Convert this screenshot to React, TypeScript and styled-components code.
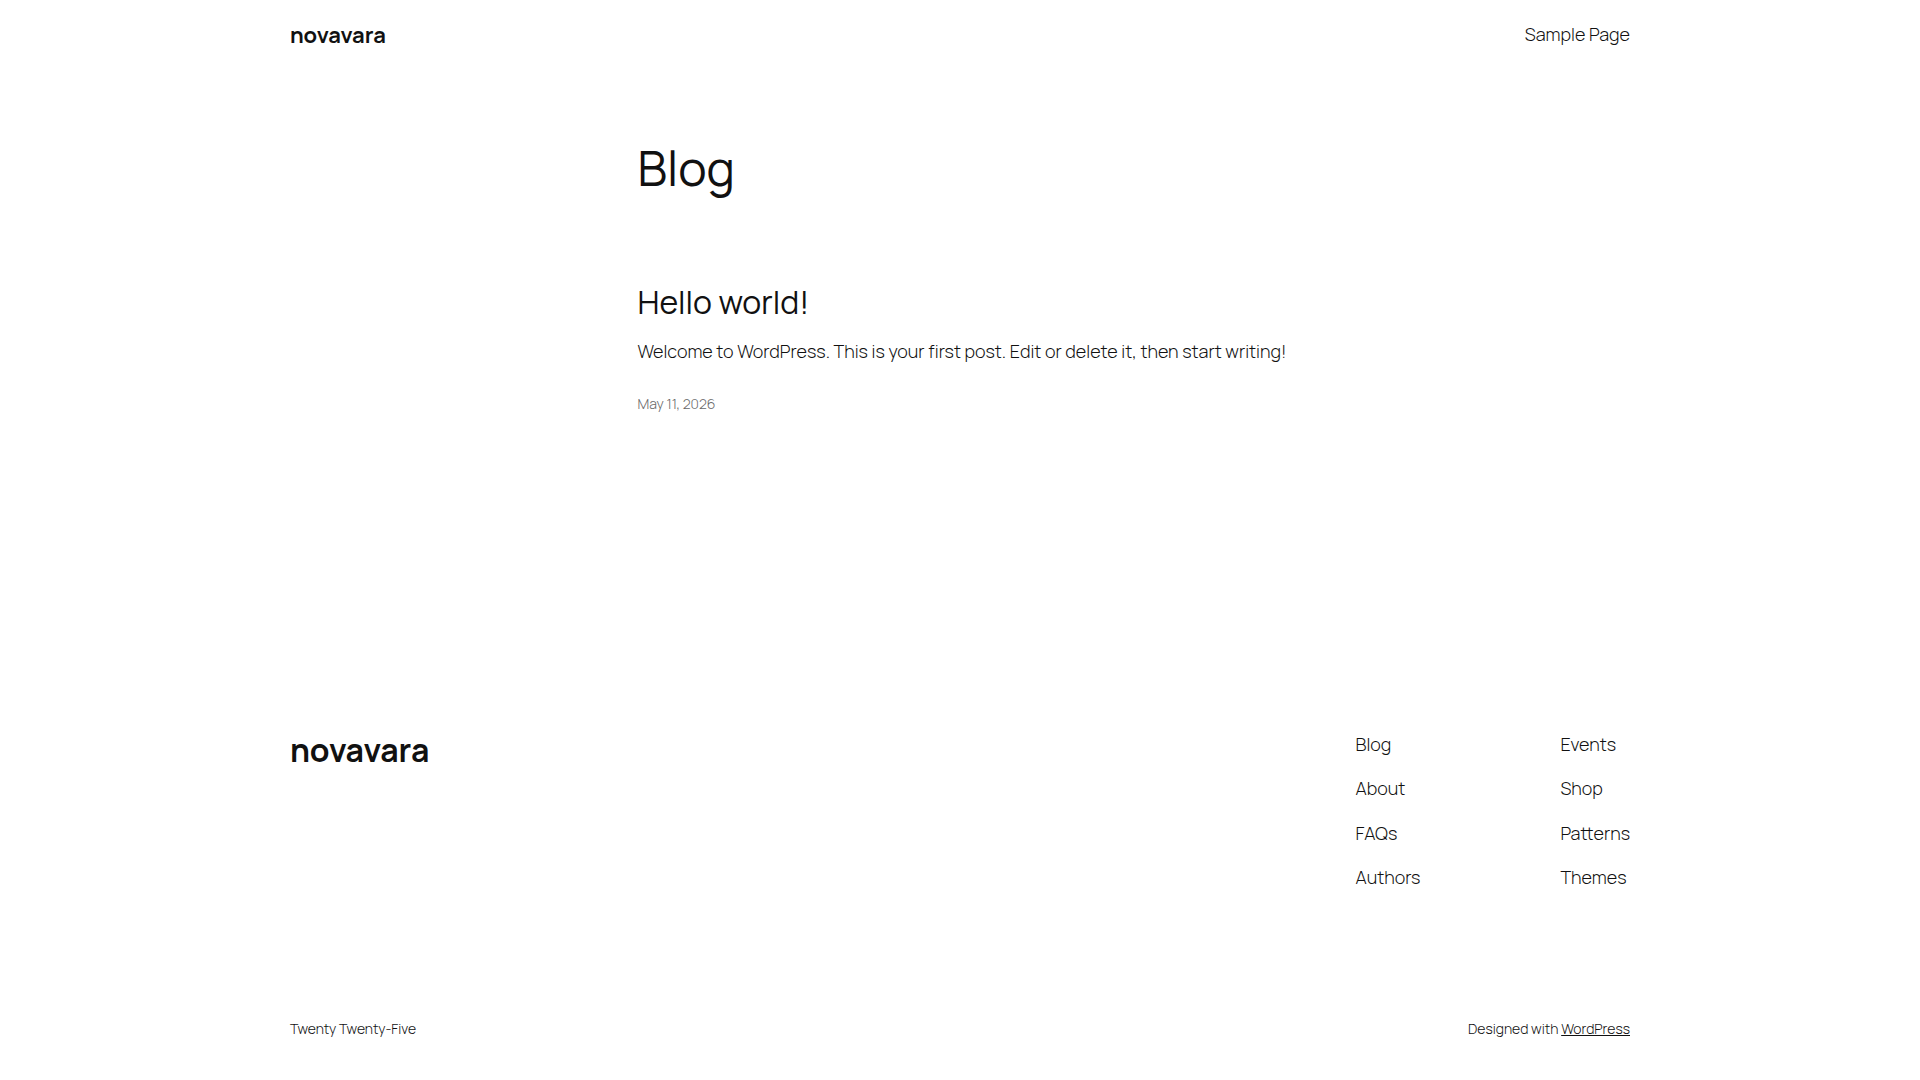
import React from "react";
import styled, { createGlobalStyle } from "styled-components";

const GlobalStyle = createGlobalStyle`
  *, *::before, *::after { box-sizing: border-box; }
  body {
    margin: 0;
    background: #fff;
    color: #111;
    font-family: Manrope, Inter, "Liberation Sans", sans-serif;
    font-size: 18px;
    font-weight: 300;
    line-height: 1.4;
  }
  a { color: inherit; text-decoration: none; }
  a:hover { text-decoration: underline; }
`;

const Section = styled.div`
  padding: 0 50px;
`;

const Wide = styled.div`
  max-width: 1340px;
  margin: 0 auto;
`;

const Narrow = styled.div`
  max-width: 645px;
  margin: 0 auto;
`;

const Bar = styled(Wide)`
  display: flex;
  align-items: center;
  justify-content: space-between;
`;

const HeaderBar = styled(Bar)`
  padding: 20px 0;
  min-height: 70px;
`;

const SiteTitle = styled.p<{ $large?: boolean }>`
  margin: 0;
  font-size: ${(p) => (p.$large ? 32 : 22)}px;
  line-height: ${(p) => (p.$large ? 36 : 30)}px;
  font-weight: 700;
`;

const PageTitle = styled.h1`
  margin: 0;
  padding-top: 70px;
  font-size: 48px;
  line-height: 56px;
  font-weight: 400;
`;

const Post = styled.article`
  padding-top: 88px;
`;

const PostTitle = styled.h2`
  margin: 0;
  font-size: 32px;
  line-height: 36px;
  font-weight: 400;
`;

const Excerpt = styled.p`
  margin: 19px 0 30px;

  @media (min-width: 782px) {
    white-space: nowrap;
  }
`;

const PostDate = styled.time`
  display: block;
  font-size: 14px;
  line-height: 20px;
  color: #686868;
`;

const FooterTop = styled(Wide)`
  display: flex;
  align-items: flex-start;
  justify-content: space-between;
  padding-top: 318px;
`;

const Menus = styled.nav`
  display: flex;
  gap: 140px;
`;

const Menu = styled.ul`
  display: flex;
  flex-direction: column;
  gap: 19px;
  margin: 0;
  padding: 0;
  list-style: none;
`;

const Credits = styled(Bar)`
  padding: 129px 0 40px;
  font-size: 14px;
  line-height: 20px;

  p { margin: 0; }
  p a { text-decoration: underline; }
`;

const menus = [
  ["Blog", "About", "FAQs", "Authors"],
  ["Events", "Shop", "Patterns", "Themes"],
];

export default function App() {
  return (
    <>
      <GlobalStyle />
      <Section as="header">
        <HeaderBar>
          <SiteTitle><a href="#home">novavara</a></SiteTitle>
          <nav><a href="#sample-page">Sample Page</a></nav>
        </HeaderBar>
      </Section>
      <Section as="main">
        <Narrow>
          <PageTitle>Blog</PageTitle>
          <Post>
            <PostTitle><a href="#hello-world">Hello world!</a></PostTitle>
            <Excerpt>Welcome to WordPress. This is your first post. Edit or delete it, then start writing!</Excerpt>
            <PostDate dateTime="2026-05-11"><a href="#hello-world">May 11, 2026</a></PostDate>
          </Post>
        </Narrow>
      </Section>
      <Section as="footer">
        <FooterTop>
          <SiteTitle $large><a href="#home">novavara</a></SiteTitle>
          <Menus>
            {menus.map((items) => (
              <Menu key={items[0]}>
                {items.map((item) => (
                  <li key={item}><a href={`#${item.toLowerCase()}`}>{item}</a></li>
                ))}
              </Menu>
            ))}
          </Menus>
        </FooterTop>
        <Credits>
          <p>Twenty Twenty-Five</p>
          <p>Designed with <a href="#wordpress">WordPress</a></p>
        </Credits>
      </Section>
    </>
  );
}
